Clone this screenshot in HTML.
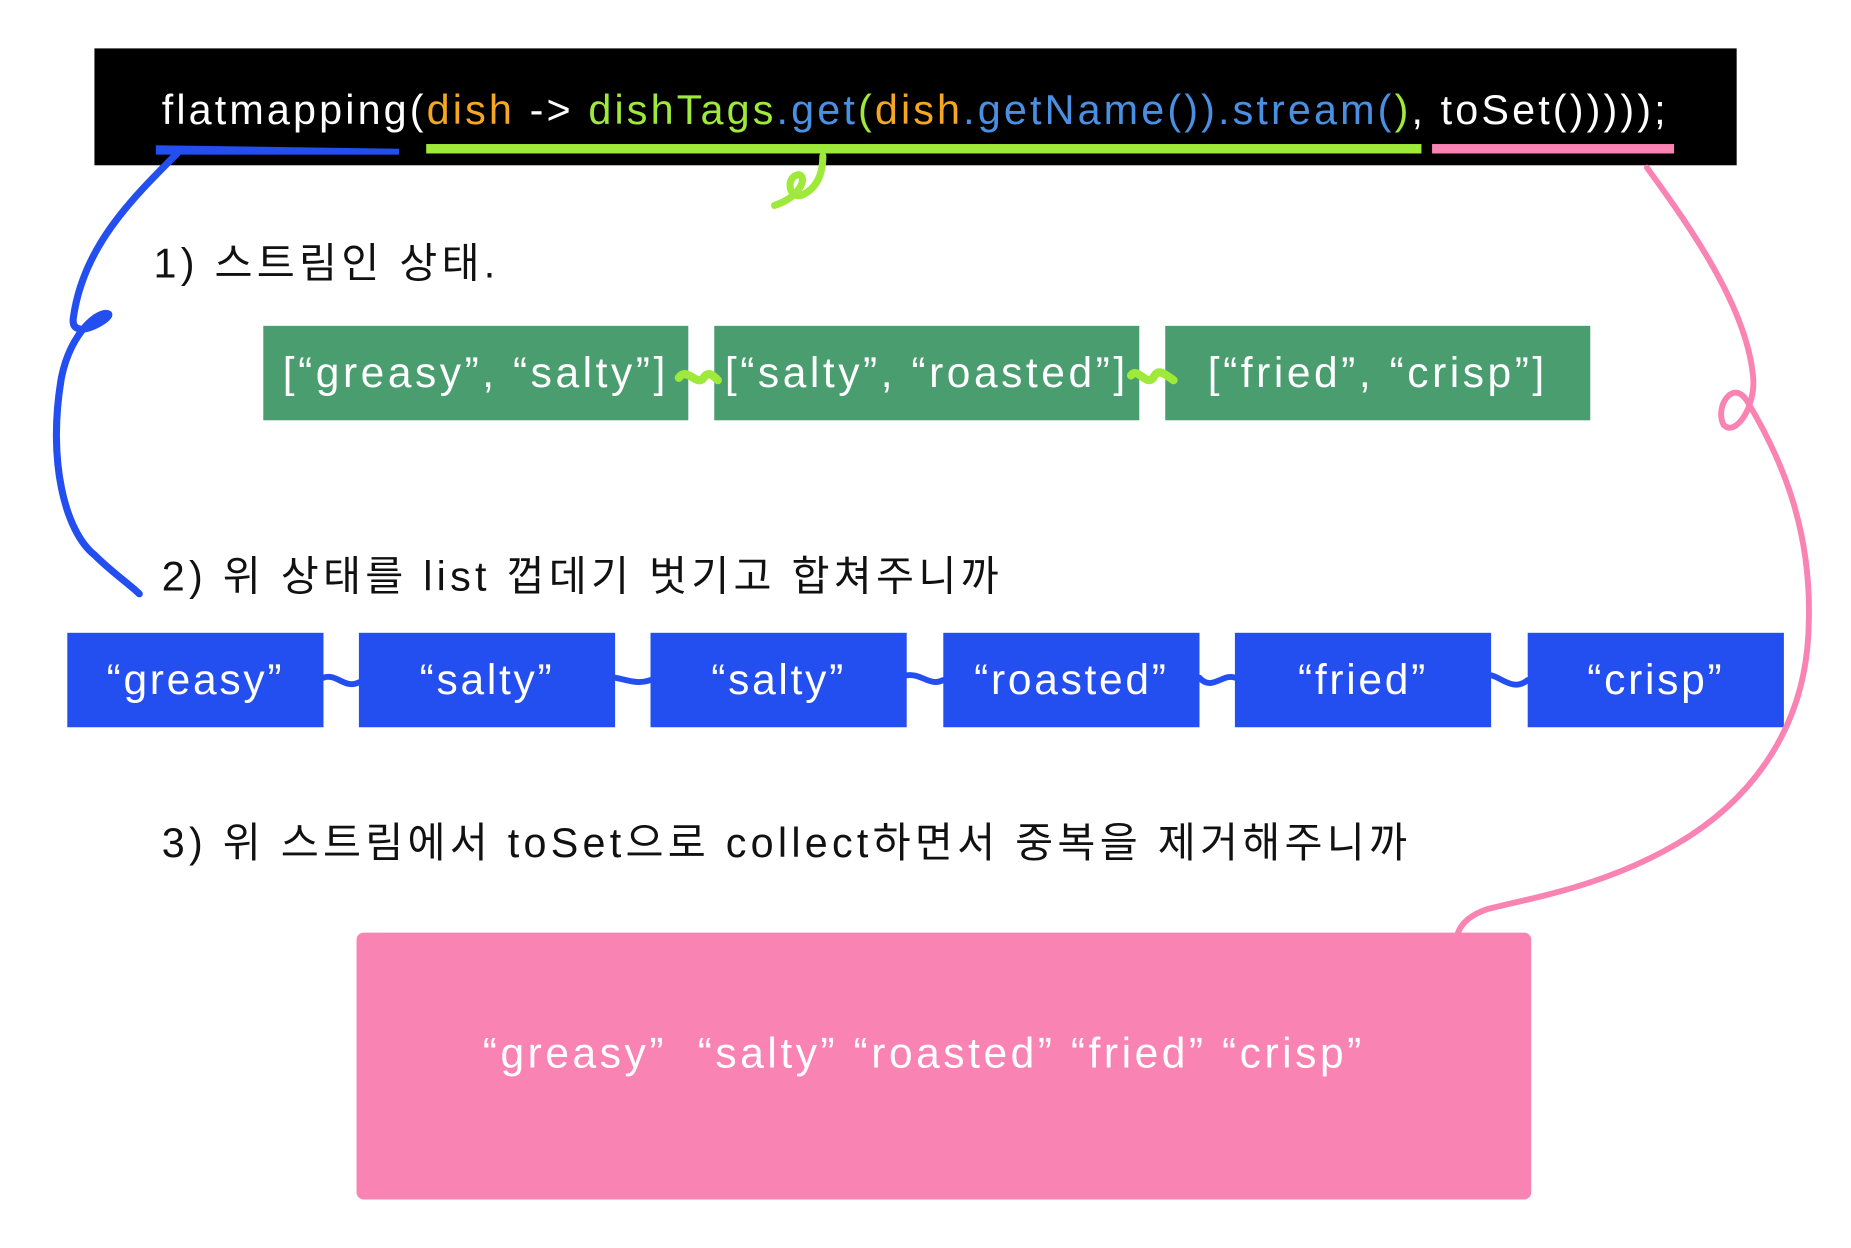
<!DOCTYPE html>
<html><head><meta charset="utf-8"><style>
html,body{margin:0;padding:0;background:#fff;width:1851px;height:1248px;overflow:hidden}
#w{position:absolute;left:0;top:0;width:1560px;height:1052px;transform:scale(1.1806);transform-origin:0 0;font-family:"Liberation Sans","Noto Sans CJK KR",sans-serif}
.a{position:absolute}
.code{left:80px;top:41px;width:1391px;height:99px;background:#000}
.ct{left:137px;top:74px;font-size:35px;color:#fff;white-space:pre;letter-spacing:2.65px}
.o{color:#f5a623}.g{color:#9fe93a}.b{color:#4a90e2}
.lbl{font-size:35px;color:#111;white-space:pre;letter-spacing:3.6px}
.gb{background:#4a9d6f;height:80px;top:276px;width:360px;color:#fff;font-size:36px;line-height:80px;text-align:center;white-space:pre;letter-spacing:3px}
.bb{background:#234ef0;height:80px;top:536px;width:217px;color:#fff;font-size:36px;line-height:80px;text-align:center;white-space:pre;letter-spacing:2.3px}
.pk{left:302px;top:790px;width:995px;height:226px;background:#f984b4;border-radius:6px;color:#fff;font-size:36px;line-height:204px;text-align:center;white-space:pre;letter-spacing:3px;box-sizing:border-box;padding-right:34px}
</style></head><body><div id="w">
<div class="a code"></div>
<div class="a ct">flatmapping(<span class="o">dish</span> -&gt; <span class="g">dishTags</span><span class="b">.get</span><span class="g">(</span><span class="o">dish</span><span class="b">.getName()).stream(</span><span class="g">)</span>, toSet()))));</div>
<div class="a lbl" style="left:130px;top:195px">1) 스트림인 상태.</div>
<div class="a gb" style="left:223px">[“greasy”, “salty”]</div>
<div class="a gb" style="left:605px">[“salty”, “roasted”]</div>
<div class="a gb" style="left:987px">[“fried”, “crisp”]</div>
<div class="a lbl" style="left:137px;top:460px">2) 위 상태를 list 껍데기 벗기고 합쳐주니까</div>
<div class="a bb" style="left:57px">“greasy”</div>
<div class="a bb" style="left:304px">“salty”</div>
<div class="a bb" style="left:551px">“salty”</div>
<div class="a bb" style="left:799px">“roasted”</div>
<div class="a bb" style="left:1046px">“fried”</div>
<div class="a bb" style="left:1294px">“crisp”</div>
<div class="a lbl" style="left:137px;top:686px">3) 위 스트림에서 toSet으로 collect하면서 중복을 제거해주니까</div>
<div class="a pk">“greasy”  “salty” “roasted” “fried” “crisp”</div>
<svg class="a" style="left:0;top:0" width="1560" height="1052" viewBox="0 0 1560 1052" fill="none" stroke-linecap="round" stroke-linejoin="round">
<path d="M132 123 L338 126 L338 131 L132 131 Z" fill="#234ef0"/>
<rect x="361" y="122" width="843" height="8" fill="#9fe93a"/>
<rect x="1213" y="122" width="205" height="8" fill="#f984b4"/>
<path d="M697 132 C697 150 690 160 680 165 C668 170 665 150 676 148 C684 148 680 166 656 174" stroke="#9fe93a" stroke-width="6"/>
<path d="M150 130 C110 170 70 210 62 270 C60 290 95 270 92 266 C85 262 60 280 52 320 C40 390 55 450 80 470 C95 485 110 495 118 503" stroke="#234ef0" stroke-width="6"/>
<path d="M1395 142 C1430 190 1480 260 1485 320 C1487 345 1470 370 1460 360 C1452 345 1468 320 1480 340 C1510 390 1535 450 1532 530 C1530 620 1480 680 1420 715 C1360 750 1300 760 1260 770 C1245 775 1238 782 1235 790" stroke="#f984b4" stroke-width="5"/>
<path d="M575 320 C582 310 590 328 596 320 C600 314 604 318 608 322" stroke="#9fe93a" stroke-width="7"/>
<path d="M958 318 C964 310 972 330 978 318 C982 312 988 318 994 322" stroke="#9fe93a" stroke-width="7"/>
<g stroke="#234ef0" stroke-width="5">
<path d="M274 574 C285 570 292 584 304 578"/>
<path d="M521 574 C532 576 540 580 551 576"/>
<path d="M768 572 C780 570 788 582 799 576"/>
<path d="M1016 574 C1026 586 1036 570 1046 574"/>
<path d="M1263 572 C1272 574 1282 586 1294 576"/>
</g>
</svg>
</div></body></html>
